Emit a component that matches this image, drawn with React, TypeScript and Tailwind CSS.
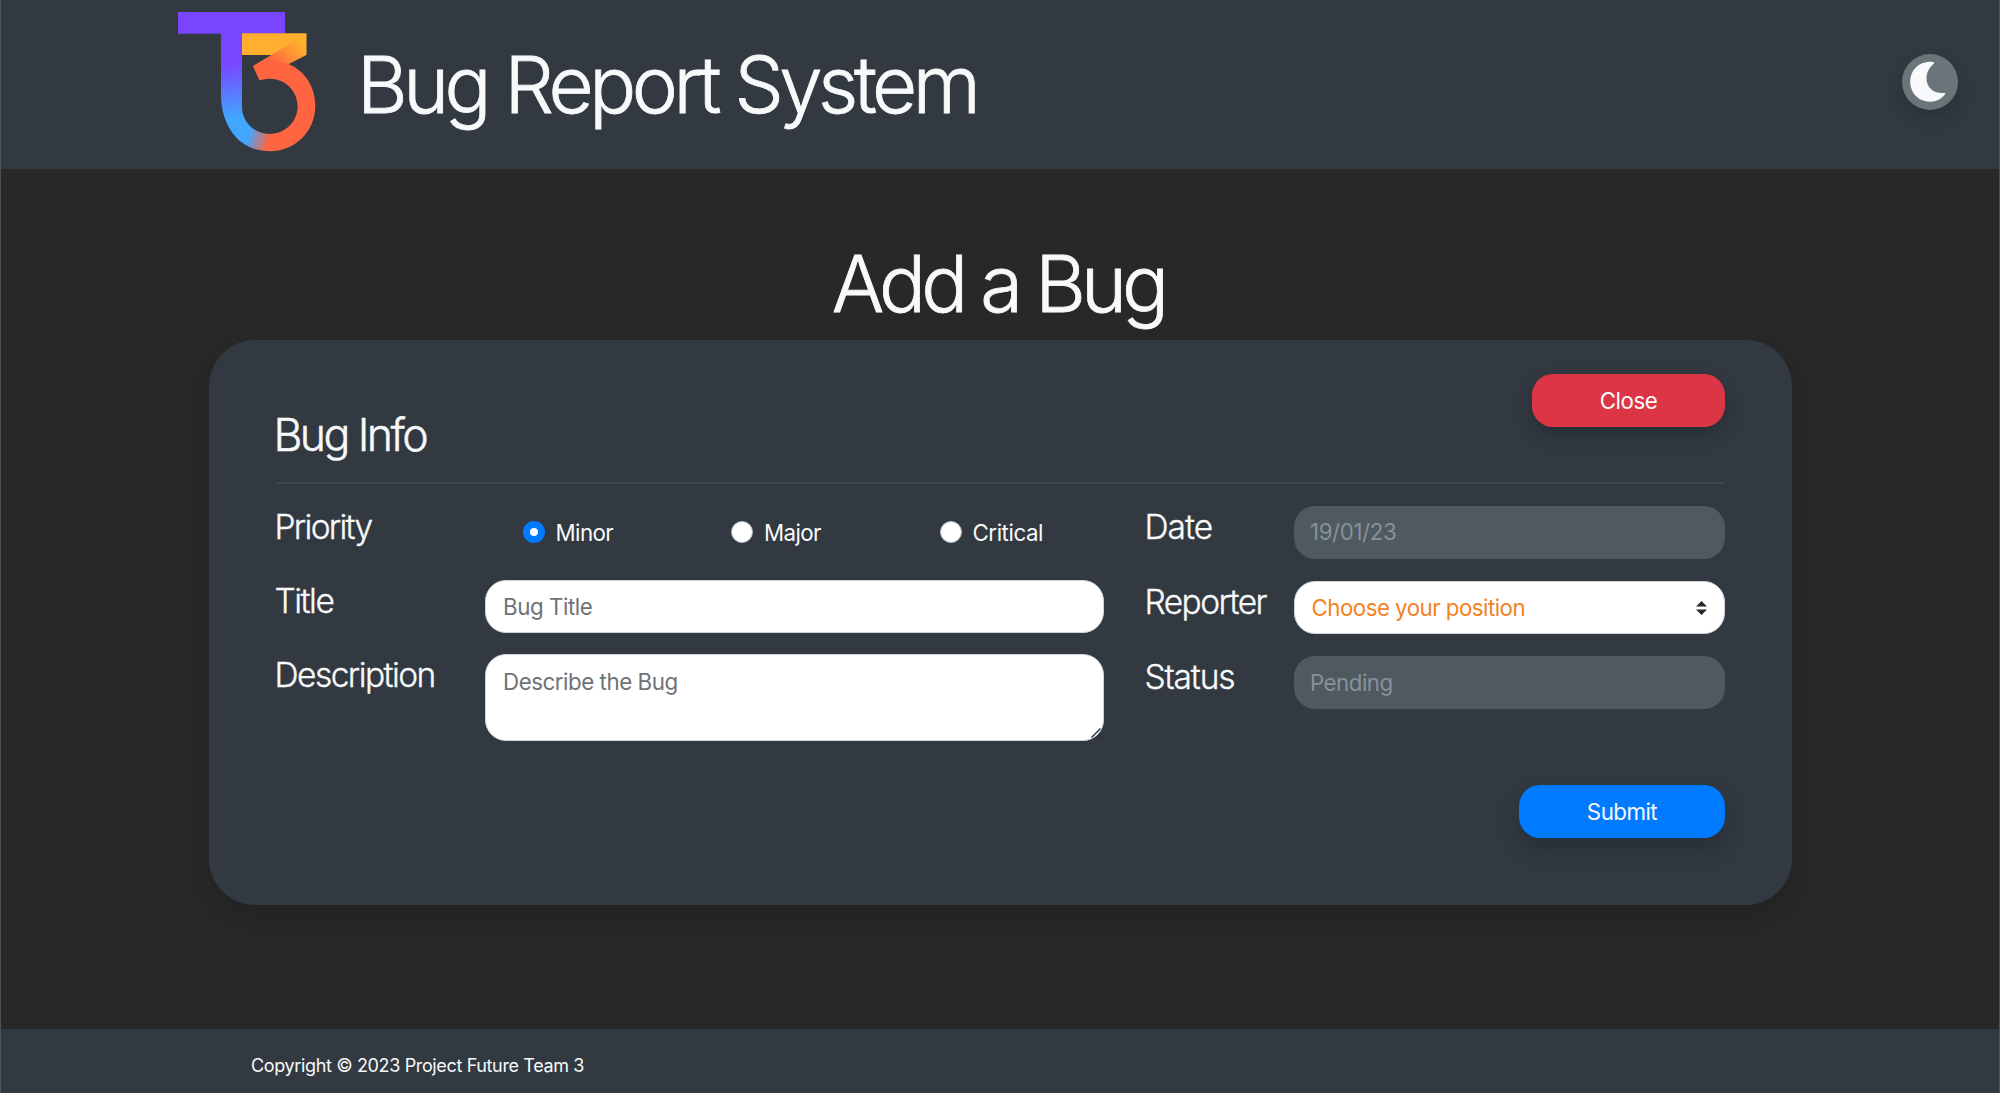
import type { ReactNode } from "react";

function Logo() {
  return (
    <svg viewBox="48 30 420 430" className="ml-[175.500px] h-[143.3px] w-[140px] shrink-0" aria-label="T3 logo">
      <defs>
        <linearGradient id="stem" gradientUnits="userSpaceOnUse" x1="200" y1="190" x2="225" y2="350">
          <stop offset="0" stopColor="#7a45ff" />
          <stop offset="0.5" stopColor="#5d74ff" />
          <stop offset="1" stopColor="#41a6ff" />
        </linearGradient>
        <linearGradient id="ring" gradientUnits="userSpaceOnUse" x1="262" y1="405" x2="324" y2="425">
          <stop offset="0" stopColor="#41a6ff" />
          <stop offset="1" stopColor="#ff6540" />
        </linearGradient>
        <linearGradient id="fold" gradientUnits="userSpaceOnUse" x1="335" y1="195" x2="415" y2="130">
          <stop offset="0" stopColor="#ff6540" />
          <stop offset="1" stopColor="#ffae2e" />
        </linearGradient>
      </defs>
      <path d="M51 36H372V101H243V320C243 345 254 366 271 382L251 433C209 407 180 352 180 285V101H51Z" fill="url(#stem)" />
      <path d="M270 381C285 394 305 402 328 402V454C298 454 272 447 250 433Z" fill="url(#ring)" />
      <path d="M243 100H436V165H243Z" fill="#ffae2e" />
      <path d="M436 101V165L383 192L330 205L276 198L410 117Z" fill="url(#fold)" />
      <path
        d="M276 198L318 173C340 182 362 183 383 192C433 213 463 262 463 318C463 394 402 454 326 454V402C373 402 410 365 410 319C410 273 373 236 326 236C315 236 306 238 295 241Z"
        fill="#ff6540"
      />
    </svg>
  );
}

function Row({ label, tracking, children }: { label: string; tracking: string; children: ReactNode }) {
  return (
    <div className="flex items-start">
      <span
        className={"w-[var(--label)] shrink-0 pt-px text-[33.5px] leading-10 font-light [-webkit-text-stroke:0.35px] " + tracking}
      >
        {label}
      </span>
      <div className="flex min-w-0 flex-1">{children}</div>
    </div>
  );
}

function Radio({ label, tracking, checked }: { label: string; tracking: string; checked?: boolean }) {
  return (
    <label className="flex w-[208.500px] items-center gap-[11px]">
      <input
        type="radio"
        name="priority"
        defaultChecked={checked}
        className="size-[22px] appearance-none rounded-full border border-[#b9bcbf] bg-white checked:border-[7px] checked:border-[#007bff]"
      />
      <span className={"pt-px " + tracking}>{label}</span>
    </label>
  );
}

const field = "w-full rounded-[21px] text-[22.3px]";

export default function App() {
  return (
    <div className="flex h-[1093px] flex-col border-x border-[#4c5256] bg-[#282828] font-['Inter',sans-serif] text-[22.3px] text-[#f8f9fa]">
      <header className="flex h-[169px] items-center bg-[#323941]">
        <div className="flex self-stretch pt-[10px]">
          <Logo />
        </div>
        <h1 className="ml-[40.500px] text-[78px] leading-[94px] font-light tracking-[-4.49px] whitespace-nowrap [-webkit-text-stroke:0.8px]">
          Bug Report System
        </h1>
        <button className="mt-[-5px] mr-[41.500px] ml-auto flex size-14 items-center justify-center rounded-full bg-[#6b7479] shadow-[0_8px_16px_rgba(0,0,0,0.15)]">
          <svg viewBox="0 0 56 56" className="size-14" fill="#f8f9fa">
            <path d="M30.8 8C18 6.500 8.200 15.500 8.200 27.500C8.200 39.500 17 47.700 28 47.700C34.500 47.700 40 44.800 43 40.300C43.700 39.200 43 38.400 41.800 38.700C31.500 40.300 24.500 33 24.500 24.500C24.500 18.200 27.500 13.500 31.600 9.800C32.700 8.900 32.200 8.100 30.800 8Z" />
          </svg>
        </button>
      </header>

      <main className="flex-1 px-[207.500px] pt-[68px]">
        <h2 className="pr-1 text-center text-[78px] leading-[94px] font-light tracking-[-4.9px] [-webkit-text-stroke:0.8px]">
          Add a Bug
        </h2>
        <section className="mt-[9px] h-[565px] rounded-[46px] bg-[#323941] pt-[33.500px] pr-[66.500px] pl-[66px] shadow-[0_11px_22px_rgba(0,0,0,0.15)]">
          <div className="ml-[1.500px] flex h-[110px] justify-between border-b-2 border-[#3e454d]">
            <h3 className="-ml-[2.500px] pt-[34px] text-[44.6px] leading-[54px] font-light tracking-[-2.6px] [-webkit-text-stroke:0.45px]">
              Bug Info
            </h3>
            <button className="h-[53px] w-[193px] rounded-[21px] bg-[#dc3545] pt-px tracking-[-0.5px] shadow-[0_8px_18px_rgba(0,0,0,0.2)]">
              Close
            </button>
          </div>

          <div className="mt-[22px] flex gap-[41px]">
            <div className="flex w-[829px] flex-col gap-[21px] [--label:210px]">
              <Row label="Priority" tracking="tracking-[-1.7px]">
                <div className="flex h-[53px] pl-[38px]">
                  <Radio label="Minor" tracking="tracking-[-0.57px]" checked />
                  <Radio label="Major" tracking="tracking-[-0.61px]" />
                  <Radio label="Critical" tracking="tracking-[-0.44px]" />
                </div>
              </Row>
              <Row label="Title" tracking="tracking-[-1.5px]">
                <input
                  placeholder="Bug Title"
                  className={field + " h-[53px] border border-[#ced4da] bg-white px-[17.500px] tracking-[-0.43px] placeholder:text-[#6d7276]"}
                />
              </Row>
              <Row label="Description" tracking="tracking-[-1.55px]">
                <div className="relative flex w-full">
                  <textarea
                    placeholder="Describe the Bug"
                    className={field + " h-[87px] resize-none border border-[#ced4da] bg-white px-[17.500px] pt-[11px] leading-8 tracking-[-0.45px] placeholder:text-[#6d7276]"}
                  />
                  <svg viewBox="0 0 12 12" className="absolute right-[2px] bottom-[2px] size-3" stroke="#25292d" strokeWidth="1.3">
                    <path d="M1.500 10.500L10.500 1.500M7.500 10.500L10.500 7.500" />
                  </svg>
                </div>
              </Row>
            </div>

            <div className="flex flex-1 flex-col gap-[22px] [--label:149px]">
              <Row label="Date" tracking="tracking-[-1px]">
                <div className={field + " flex h-[53px] items-center bg-[#4f5960] pl-[16.500px] tracking-[-0.39px] text-[#87919b]"}>19/01/23</div>
              </Row>
              <Row label="Reporter" tracking="tracking-[-1.55px]">
                <div className={field + " flex h-[53px] items-center justify-between border border-[#ced4da] bg-white pt-px pr-[17.500px] pl-[17px] tracking-[-0.52px] text-[#f5821f]"}>
                  Choose your position
                  <svg viewBox="0 0 11 14" className="h-3.5 w-[11px]" fill="#24292e">
                    <path d="M0 5.500L5.500 0L11 5.500ZM0 8.500L5.500 14L11 8.500Z" />
                  </svg>
                </div>
              </Row>
              <Row label="Status" tracking="tracking-[-1.15px]">
                <div className={field + " flex h-[53px] items-center bg-[#4f5960] pt-px pl-[16.500px] tracking-[-0.5px] text-[#87919b]"}>Pending</div>
              </Row>
            </div>
          </div>

          <div className="mt-[44px] flex justify-end">
            <button className="h-[53px] w-[206px] rounded-[21px] bg-[#007bff] pt-0.5 tracking-[-0.51px] shadow-[0_11px_22px_rgba(0,0,0,0.2)]">
              Submit
            </button>
          </div>
        </section>
      </main>

      <footer className="flex h-16 items-center bg-[#323941] pt-2 pl-[250px] text-[18px] tracking-[-0.36px]">
        Copyright © 2023 Project Future Team 3
      </footer>
    </div>
  );
}
